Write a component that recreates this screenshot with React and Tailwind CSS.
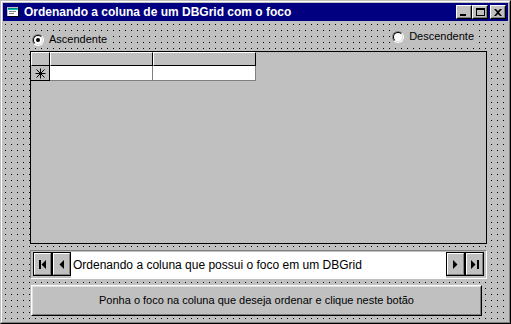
import React from 'react';

const FONT = "font-['Liberation_Sans',Arial,sans-serif]";

function Radio({ checked, label, className = '' }) {
  return (
    <div className={`flex items-center gap-[5px] ${className}`}>
      <div className="w-[12px] h-[12px] rounded-full border border-t-[#808080] border-l-[#808080] border-r-white border-b-white">
        <div className="w-full h-full rounded-full border border-t-black border-l-black border-r-[#dfdfdf] border-b-[#dfdfdf] bg-white flex items-center justify-center">
          {checked && <div className="w-[4px] h-[4px] rounded-full bg-black" />}
        </div>
      </div>
      <span className="text-[11px] leading-[13px] text-black">{label}</span>
    </div>
  );
}

function TitleButton({ children }) {
  return (
    <div className="w-[16px] h-[14px] bg-[#c0c0c0] border border-t-white border-l-white border-r-black border-b-black">
      <div className="w-full h-full border border-t-[#c0c0c0] border-l-[#c0c0c0] border-r-[#808080] border-b-[#808080] flex items-center justify-center">
        {children}
      </div>
    </div>
  );
}

function NavButton({ children }) {
  return (
    <div className="w-[19px] h-[24px] border border-black bg-[#c0c0c0]">
      <div className="w-full h-full border border-t-white border-l-white border-r-[#808080] border-b-[#808080] flex items-center justify-center">
        {children}
      </div>
    </div>
  );
}

function HeaderCell({ width }) {
  return <div className={`${width} h-full border-r border-b border-black bg-[#c0c0c0] border-t border-l border-t-white border-l-white`} />;
}

export default function App() {
  return (
    <div className={`${FONT} w-[511px] h-[324px] bg-[#c0c0c0] border border-t-[#c0c0c0] border-l-[#c0c0c0] border-r-black border-b-black`}>
      <div className="w-full h-full border border-t-white border-l-white border-r-[#808080] border-b-[#808080] p-[1px] flex flex-col">
        {/* Title bar */}
        <div className="h-[18px] bg-[#000080] flex items-center pl-[2px] pr-[2px] shrink-0">
          <svg width="16" height="16" viewBox="0 0 16 16" className="shrink-0">
            <path d="M2 3h11v9H2z" fill="#fff" />
            <path d="M2 3h11v3H2z" fill="#00c0c0" />
            <path d="M3 4h9v1H3z" fill="#008080" />
            <path d="M13 4h1v9H3v-1h10z" fill="#000" />
            <path d="M2 3h11v1H3v8H2z" fill="#c0c0c0" />
            <path d="M4 7h7v1H4zM4 9h5v1H4z" fill="#808080" />
          </svg>
          <span className="ml-[3px] text-white font-bold text-[12px] leading-[14px] whitespace-nowrap">
            Ordenando a coluna de um DBGrid com o foco
          </span>
          <div className="ml-auto flex items-center">
            <TitleButton>
              <div className="w-[6px] h-[2px] bg-black mt-[6px] mr-[2px]" />
            </TitleButton>
            <TitleButton>
              <div className="w-[9px] h-[8px] border border-black border-t-2" />
            </TitleButton>
            <div className="w-[2px]" />
            <TitleButton>
              <svg width="8" height="7" viewBox="0 0 8 7">
                <path d="M0 0h2l2 2 2-2h2L5 3.5 8 7H6L4 5 2 7H0l3-3.5z" fill="#000" />
              </svg>
            </TitleButton>
          </div>
        </div>

        {/* Client area */}
        <div className="flex-1 mt-[1px] pl-[27px] flex flex-col bg-[#c0c0c0] bg-[linear-gradient(to_bottom,transparent_1px,#c0c0c0_1px),linear-gradient(to_right,#000_1px,#c0c0c0_1px)] bg-[length:6px_6px] bg-[position:2px_2px] text-black">
          {/* Radios */}
          <div className="h-[29px] w-[446px] flex justify-between items-start">
            <Radio checked label="Ascendente" className="mt-[11px] ml-[2px] bg-[#c0c0c0] pr-[2px]" />
            <Radio label="Descendente" className="mt-[8px] bg-[#c0c0c0] pr-[2px]" />
          </div>

          {/* DBGrid */}
          <div className="w-[457px] h-[193px] border border-black bg-[#c0c0c0] shrink-0">
            <div className="flex h-[14px]">
              <HeaderCell width="w-[19px]" />
              <HeaderCell width="w-[103px]" />
              <HeaderCell width="w-[103px]" />
            </div>
            <div className="flex h-[15px]">
              <div className="w-[19px] h-full border-r border-b border-black bg-[#c0c0c0] flex items-center justify-center">
                <svg width="11" height="11" viewBox="0 0 11 11">
                  <path d="M5.5 0.5v10M0.5 5.5h10M1.5 1.5l8 8M9.5 1.5l-8 8" stroke="#000" strokeWidth="1" />
                </svg>
              </div>
              <div className="w-[103px] h-full border-r border-b border-[#808080] bg-white" />
              <div className="w-[103px] h-full border-r border-b border-[#808080] bg-white" />
            </div>
          </div>

          {/* Data control */}
          <div className="mt-[6px] w-[457px] h-[29px] border border-t-[#808080] border-l-[#808080] border-r-white border-b-white bg-[#c0c0c0] pt-[1px] pl-[2px] pr-[2px] shrink-0">
            <div className="flex h-full">
              <NavButton>
                <svg width="8" height="9" viewBox="0 0 8 9">
                  <path d="M0 0h2v9H0zM7 0v9L2.5 4.5z" fill="#000" />
                </svg>
              </NavButton>
              <NavButton>
                <svg width="5" height="9" viewBox="0 0 5 9">
                  <path d="M5 0v9L0.5 4.5z" fill="#000" />
                </svg>
              </NavButton>
              <div className="flex-1 bg-white flex items-center pl-[2px] text-[12px] leading-[14px] whitespace-nowrap">
                Ordenando a coluna que possui o foco em um DBGrid
              </div>
              <NavButton>
                <svg width="5" height="9" viewBox="0 0 5 9">
                  <path d="M0 0v9L4.5 4.5z" fill="#000" />
                </svg>
              </NavButton>
              <NavButton>
                <svg width="8" height="9" viewBox="0 0 8 9">
                  <path d="M0 0v9L4.5 4.5zM6 0h2v9H6z" fill="#000" />
                </svg>
              </NavButton>
            </div>
          </div>

          {/* Button */}
          <div className="mt-[6px] ml-[1px] w-[451px] h-[31px] border border-t-white border-l-white border-r-black border-b-black bg-[#c0c0c0] shrink-0">
            <div className="w-full h-full border border-t-[#dfdfdf] border-l-[#dfdfdf] border-r-[#808080] border-b-[#808080] flex items-center justify-center text-[11px] leading-[13px]">
              Ponha o foco na coluna que deseja ordenar e clique neste botão
            </div>
          </div>
        </div>
      </div>
    </div>
  );
}
